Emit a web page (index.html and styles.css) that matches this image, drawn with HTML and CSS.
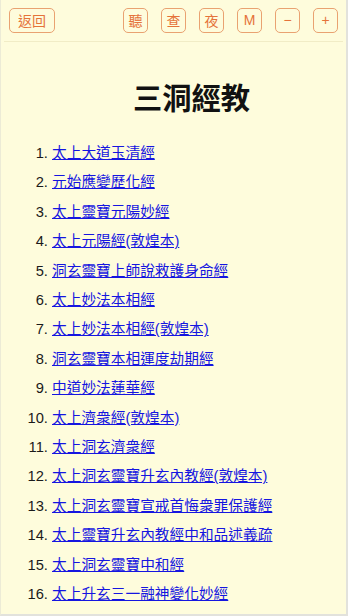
FILE: index.html
```html
<!DOCTYPE html>
<html lang="zh-Hant">
<head>
<meta charset="utf-8">
<title>三洞經教</title>
<link rel="stylesheet" href="styles.css">
</head>
<body>
<div class="frame">
  <header class="topbar">
    <button class="btn btn-wide">返回</button>
    <div class="tools">
      <button class="btn">聽</button>
      <button class="btn">查</button>
      <button class="btn">夜</button>
      <button class="btn btn-latin">M</button>
      <button class="btn btn-latin">−</button>
      <button class="btn btn-latin">+</button>
    </div>
  </header>
  <main class="content">
    <h1 class="title">三洞經教</h1>
    <ol class="list">
      <li><a href="#">太上大道玉清經</a></li>
      <li><a href="#">元始應變歷化經</a></li>
      <li><a href="#">太上靈寶元陽妙經</a></li>
      <li><a href="#">太上元陽經(敦煌本)</a></li>
      <li><a href="#">洞玄靈寶上師說救護身命經</a></li>
      <li><a href="#">太上妙法本相經</a></li>
      <li><a href="#">太上妙法本相經(敦煌本)</a></li>
      <li><a href="#">洞玄靈寶本相運度劫期經</a></li>
      <li><a href="#">中道妙法蓮華經</a></li>
      <li><a href="#">太上濟衆經(敦煌本)</a></li>
      <li><a href="#">太上洞玄濟衆經</a></li>
      <li><a href="#">太上洞玄靈寶升玄內教經(敦煌本)</a></li>
      <li><a href="#">太上洞玄靈寶宣戒首悔衆罪保護經</a></li>
      <li><a href="#">太上靈寶升玄內教經中和品述義疏</a></li>
      <li><a href="#">太上洞玄靈寶中和經</a></li>
      <li><a href="#">太上升玄三一融神變化妙經</a></li>
    </ol>
  </main>
</div>
</body>
</html>
```

FILE: styles.css
```css
html, body {
  margin: 0;
  padding: 0;
  height: 100%;
  overflow: hidden;
  background: #fefcdc;
}

body {
  font-family: "Liberation Sans", "Noto Sans CJK TC", sans-serif;
  font-size: 14.7px;
  color: #1a1a1a;
}

.frame {
  height: 616px;
  box-sizing: border-box;
  border-left: 1px solid #ecebd6;
  border-right: 2px solid #e2e2dc;
  border-bottom: 2px solid #e2e2dc;
  overflow: hidden;
}

.topbar {
  height: 42px;
  box-sizing: border-box;
  margin: 0 3px;
  padding: 8px 5px 0 5px;
  display: flex;
  justify-content: space-between;
  align-items: flex-start;
  border-bottom: 1px solid #f1ecc6;
}

.tools {
  display: flex;
  gap: 13px;
}

.btn {
  width: 25px;
  height: 25px;
  padding: 0;
  box-sizing: border-box;
  border: 1px solid #e9a271;
  border-radius: 5px;
  background: transparent;
  color: #e5733a;
  font-family: "Noto Sans CJK TC", "Liberation Sans", sans-serif;
  font-size: 14px;
  line-height: 23px;
  text-align: center;
}

.btn-wide {
  width: 46px;
}

.btn-latin {
  font-family: "Liberation Sans", sans-serif;
  font-size: 14px;
}

.content {
  padding: 0;
}

.title {
  margin: 39px 0 23px 0;
  padding-left: 36px;
  text-align: center;
  font-size: 29.3px;
  line-height: 35px;
  font-weight: bold;
  color: #111;
}

.list {
  margin: 0;
  padding-left: 51px;
}

.list li {
  line-height: 29.4px;
}

.list a {
  color: #1515e0;
  text-decoration: underline;
}
```
